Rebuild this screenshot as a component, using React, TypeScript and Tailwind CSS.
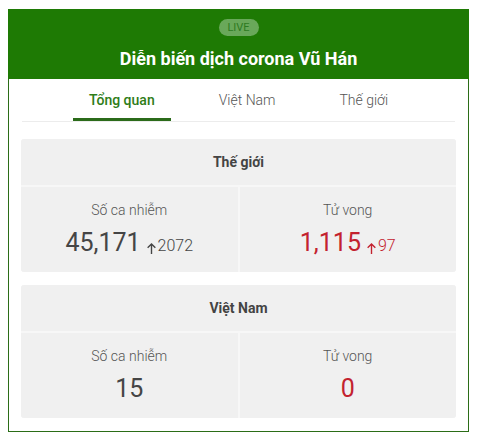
const font = { fontFamily: 'Roboto, "Noto Sans", sans-serif' }

function Arrow({ className }: { className: string }) {
  return (
    <svg viewBox="0 0 12 14" width="11" height="13" className={className} fill="none" stroke="currentColor" strokeWidth="1.5">
      <path d="M6 13V2M1.8 6.2L6 2l4.2 4.2" />
    </svg>
  )
}

function Stat({ label, value, delta, red }: { label: string; value: string; delta?: string; red?: boolean }) {
  const color = red ? 'text-[#c3222f]' : 'text-[#454545]'
  return (
    <div className="bg-[#f0f0f0] h-[85px] flex flex-col items-center pt-[13px]">
      <div className="text-[14px] font-light text-[#555] leading-[20px]">{label}</div>
      <div className={`flex items-baseline mt-[7px] ${color}`}>
        <span className="text-[25px] leading-[32px]">{value}</span>
        {delta && (
          <span className="flex items-baseline ml-[5px] text-[16px] font-light">
            <Arrow className="self-center translate-y-[2px]" />
            <span className="ml-[1px]">{delta}</span>
          </span>
        )}
      </div>
    </div>
  )
}

function Region({ title, cases, casesDelta, deaths, deathsDelta }: { title: string; cases: string; casesDelta?: string; deaths: string; deathsDelta?: string }) {
  return (
    <div className="grid grid-cols-2 gap-[2px] bg-[#f7f7f7] rounded-[3px] overflow-hidden">
      <div className="col-span-2 bg-[#f0f0f0] h-[46px] flex items-center justify-center text-[14px] font-bold text-[#444]">
        {title}
      </div>
      <Stat label="Số ca nhiễm" value={cases} delta={casesDelta} />
      <Stat label="Tử vong" value={deaths} delta={deathsDelta} red />
    </div>
  )
}

export default function App() {
  return (
    <div className="w-[477px] h-[437px] bg-white pt-[9px] pl-[8px]" style={font}>
      <div className="w-[461px] h-[423px] border border-[#2b6d17] flex flex-col">
        {/* tiêu đề */}
        <div className="bg-[#1e7a04] h-[70px] flex flex-col items-center pt-[10px] -mx-px -mt-px">
          <div className="w-[40px] h-[17px] rounded-full bg-[#69a85a] text-[#2e7a22] text-[11px] flex items-center justify-center leading-none">
            LIVE
          </div>
          <div className="text-white text-[18px] font-bold mt-[11px] leading-[24px]">Diễn biến dịch corona Vũ Hán</div>
        </div>
        {/* tabs */}
        <div className="mx-[13px] border-b border-[#ececec] flex justify-center gap-8 h-[43px]">
          <div className="px-4 flex items-center text-[14px] font-medium text-[#2e7d18] border-b-[3px] border-[#2b6b1a] pt-[3px]">Tổng quan</div>
          <div className="px-4 flex items-center text-[14px] font-light text-[#555]">Việt Nam</div>
          <div className="px-4 flex items-center text-[14px] font-light text-[#555]">Thế giới</div>
        </div>
        <div className="px-[12px] pt-[17px] flex flex-col gap-[13px]">
          <Region title="Thế giới" cases="45,171" casesDelta="2072" deaths="1,115" deathsDelta="97" />
          <Region title="Việt Nam" cases="15" deaths="0" />
        </div>
      </div>
    </div>
  )
}
